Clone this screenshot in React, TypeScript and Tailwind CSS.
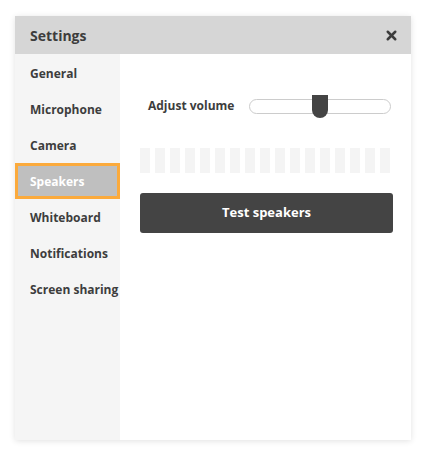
import { X } from 'lucide-react'

const MENU = ['General', 'Microphone', 'Camera', 'Speakers', 'Whiteboard', 'Notifications', 'Screen sharing']
const ACTIVE = 'Speakers'

function App() {
  return (
    <div className="h-[456px] w-[426px] bg-white pl-[15px] pt-[16px] font-['Open_Sans',sans-serif] text-[#3d3d3d]">
      <div className="flex h-[424px] w-[396px] flex-col bg-white shadow-[0_1px_6px_rgba(0,0,0,0.12)]">
        <div className="flex h-[38px] shrink-0 items-center justify-between bg-[#d6d6d6] pl-[15px] pr-[12px]">
          <span className="text-[14px] font-bold">Settings</span>
          <X size={15} strokeWidth={4} className="text-[#3d3d3d]" />
        </div>
        <div className="flex flex-1">
          <nav className="flex w-[105px] shrink-0 flex-col bg-[#f5f5f5] pt-[1px]">
            {MENU.map((m) => (
              <div
                key={m}
                className={
                  m === ACTIVE
                    ? 'flex h-[36px] items-center whitespace-nowrap border-[3px] border-[#fbaa3c] bg-[#bfbfbf] pl-[12px] pt-[1px] text-[12px] font-bold text-white'
                    : 'flex h-[36px] items-center whitespace-nowrap pl-[15px] pt-[1px] text-[12px] font-bold'
                }
              >
                {m}
              </div>
            ))}
          </nav>
          <div className="flex flex-1 flex-col pl-[20px] pr-[18px] pt-[39px]">
            <div className="flex h-[23px] items-center pl-[8px] pt-[3px]">
              <span className="w-[101px] text-[12px] font-bold">Adjust volume</span>
              <div className="relative h-[15px] w-[142px] rounded-full border border-[#cccccc]">
                <div className="absolute left-[62px] top-[-5px] h-[23px] w-[16px] rounded-b-full rounded-t-[3px] bg-[#444444]" />
              </div>
            </div>
            <div className="mt-[32px] flex gap-[5px]">
              {Array.from({ length: 17 }).map((_, i) => (
                <div key={i} className="h-[25px] w-[10px] bg-[#f4f4f4]" />
              ))}
            </div>
            <button
              type="button"
              className="mt-[20px] h-[40px] w-[253px] rounded-[3px] bg-[#444444] text-[13px] font-bold text-white"
            >
              Test speakers
            </button>
          </div>
        </div>
      </div>
    </div>
  )
}

export default App
